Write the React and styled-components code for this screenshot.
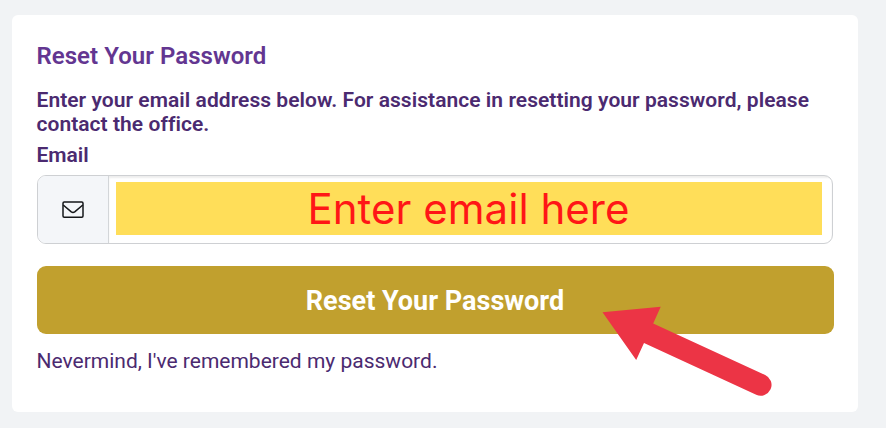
import React from "react"
import styled, { createGlobalStyle } from "styled-components"

const GlobalStyle = createGlobalStyle`
  * {
    box-sizing: border-box;
  }

  body {
    margin: 0;
    background-color: #f1f3f5;
    font-family: Roboto, sans-serif;
    color: #4b2a70;
  }
`

const Page = styled.div`
  position: relative;
  height: 428px;
  padding: 15px 28px 16px 12px;
  overflow: hidden;
`

const Card = styled.main`
  width: 846px;
  height: 397px;
  padding: 27px 24px 0 24.5px;
  border-radius: 6px;
  background-color: #fff;
`

const Title = styled.h1`
  margin: 0 0 18px;
  font-size: 24px;
  line-height: 28px;
  font-weight: 600;
  letter-spacing: 0.04px;
  color: #633691;
`

const Description = styled.p`
  margin: 0;
  font-size: 21px;
  line-height: 24px;
  font-weight: 600;
  letter-spacing: 0.045px;
  white-space: nowrap;
`

const Label = styled.label`
  display: block;
  margin: 7px 0 8px;
  font-size: 21px;
  line-height: 24px;
  font-weight: 600;
`

const InputGroup = styled.div`
  display: flex;
  width: 796px;
  height: 69px;
  border: 1px solid #ced0d3;
  border-radius: 9px;
  overflow: hidden;
`

const InputIcon = styled.div`
  display: flex;
  width: 71px;
  align-items: center;
  justify-content: center;
  border-right: 1px solid #d3d6d9;
  background-color: #f4f6f9;
`

const InputField = styled.div`
  flex: 1;
  padding: 6px 10px 8px 7px;
  box-shadow: inset 0 2px 2px rgba(0, 0, 0, 0.07);
`

const Highlight = styled.div`
  display: flex;
  height: 53px;
  align-items: center;
  justify-content: center;
  background-color: #ffde59;
  font-family: Inter, sans-serif;
  font-size: 42px;
  line-height: 53px;
  letter-spacing: 0.04px;
  color: #ff1616;
  white-space: nowrap;
`

const Button = styled.button`
  display: block;
  width: 797px;
  height: 68px;
  margin: 22px 0 15px;
  padding: 2px 0 0;
  border: 0;
  border-radius: 9px;
  background-color: #c1a02e;
  font-family: inherit;
  font-size: 27px;
  font-weight: 700;
  line-height: 66px;
  color: #fff;
`

const BackLink = styled.a`
  display: block;
  font-size: 21px;
  line-height: 24px;
`

const Arrow = styled.svg`
  position: absolute;
  top: 300px;
  left: 596px;
`

const Envelope = () => (
  <svg width="22" height="18" viewBox="0 0 22 18" fill="none" stroke="#15171a" strokeWidth="1.5">
    <rect x="1" y="1" width="20" height="15.2" rx="1.2" />
    <path d="M1.2 4L9.3 10.9Q11 12.2 12.7 10.9L20.8 4" />
  </svg>
)

const App = () => {
  return (
    <>
      <GlobalStyle />
      <Page>
        <Card>
          <Title>Reset Your Password</Title>
          <Description>
            Enter your email address below. For assistance in resetting your password, please
            <br />
            contact the office.
          </Description>
          <Label>Email</Label>
          <InputGroup>
            <InputIcon>
              <Envelope />
            </InputIcon>
            <InputField>
              <Highlight>Enter email here</Highlight>
            </InputField>
          </InputGroup>
          <Button>Reset Your Password</Button>
          <BackLink>Nevermind, I've remembered my password.</BackLink>
        </Card>
        <Arrow width="180" height="100" viewBox="596 300 180 100" fill="#ec3445">
          <path d="M602.5 312.2L660.7 306.8L653.2 323.6L765.2 375A10.7 10.7 0 0 1 756.2 394.7L644 343L636.2 360Z" />
        </Arrow>
      </Page>
    </>
  )
}

export default App
